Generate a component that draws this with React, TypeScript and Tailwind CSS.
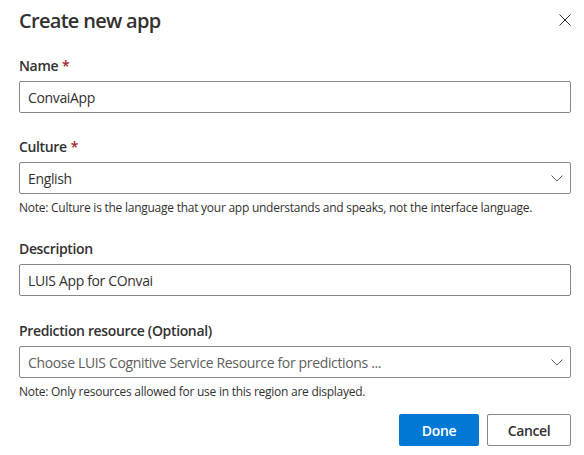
import React from 'react';

const font = { fontFamily: '"Open Sans", "Noto Sans", sans-serif' };

const Chevron = () => (
  <svg width="12" height="7" viewBox="0 0 12 7" fill="none" className="text-[#605e5c]">
    <path d="M0.5 0.5 L6 6 L11.5 0.5" stroke="currentColor" strokeWidth="1" />
  </svg>
);

const Label = ({ text, required }: { text: string; required?: boolean }) => (
  <label className="block py-[5px] text-[14px] leading-5 font-semibold text-[#323130]">
    {text}
    {required && <span className="text-[#a4262c] pl-1">*</span>}
  </label>
);

const TextBox = ({ value }: { value: string }) => (
  <div className="h-8 border border-[#8a8886] rounded-[2px] px-2 flex items-center text-[14px] text-[#323130]">
    {value}
  </div>
);

const Dropdown = ({ value, placeholder }: { value: string; placeholder?: boolean }) => (
  <div className="h-8 border border-[#8a8886] rounded-[2px] pl-2 pr-[7px] flex items-center justify-between text-[14px]">
    <span className={placeholder ? 'text-[#605e5c]' : 'text-[#323130]'}>{value}</span>
    <Chevron />
  </div>
);

const Note = ({ text }: { text: string }) => (
  <p className="pt-[6px] text-[12px] leading-4 text-[#323130] tracking-[-0.021em]">{text}</p>
);

export default function App() {
  return (
    <div className="w-[584px] h-[455px] bg-white pl-[19px] pr-[13px] tracking-[-0.022em]" style={font}>
      <div className="flex items-start justify-between pt-[7px] h-[51px]">
        <h1 className="text-[20px] leading-7 font-semibold text-[#323130] tracking-[-0.035em]">Create new app</h1>
        <button className="mt-[7px] text-[#323130]">
          <svg width="12" height="12" viewBox="0 0 12 12" fill="none">
            <path d="M0.5 0.5 L11.5 11.5 M11.5 0.5 L0.5 11.5" stroke="currentColor" strokeWidth="1" />
          </svg>
        </button>
      </div>

      <Label text="Name" required />
      <TextBox value="ConvaiApp" />

      <div className="mt-[19px]">
        <Label text="Culture" required />
        <Dropdown value="English" />
        <Note text="Note: Culture is the language that your app understands and speaks, not the interface language." />
      </div>

      <div className="mt-[18px]">
        <Label text="Description" />
        <TextBox value="LUIS App for COnvai" />
      </div>

      <div className="mt-[20px]">
        <Label text="Prediction resource (Optional)" />
        <Dropdown value="Choose LUIS Cognitive Service Resource for predictions ..." placeholder />
        <Note text="Note: Only resources allowed for use in this region are displayed." />
      </div>

      <div className="flex justify-end gap-2 mt-[14px]">
        <button className="h-8 w-20 rounded-[2px] bg-[#0078d4] text-white text-[14px] font-semibold">Done</button>
        <button className="h-8 w-[84px] rounded-[2px] border border-[#8a8886] bg-white text-[#323130] text-[14px] font-semibold">Cancel</button>
      </div>
    </div>
  );
}
